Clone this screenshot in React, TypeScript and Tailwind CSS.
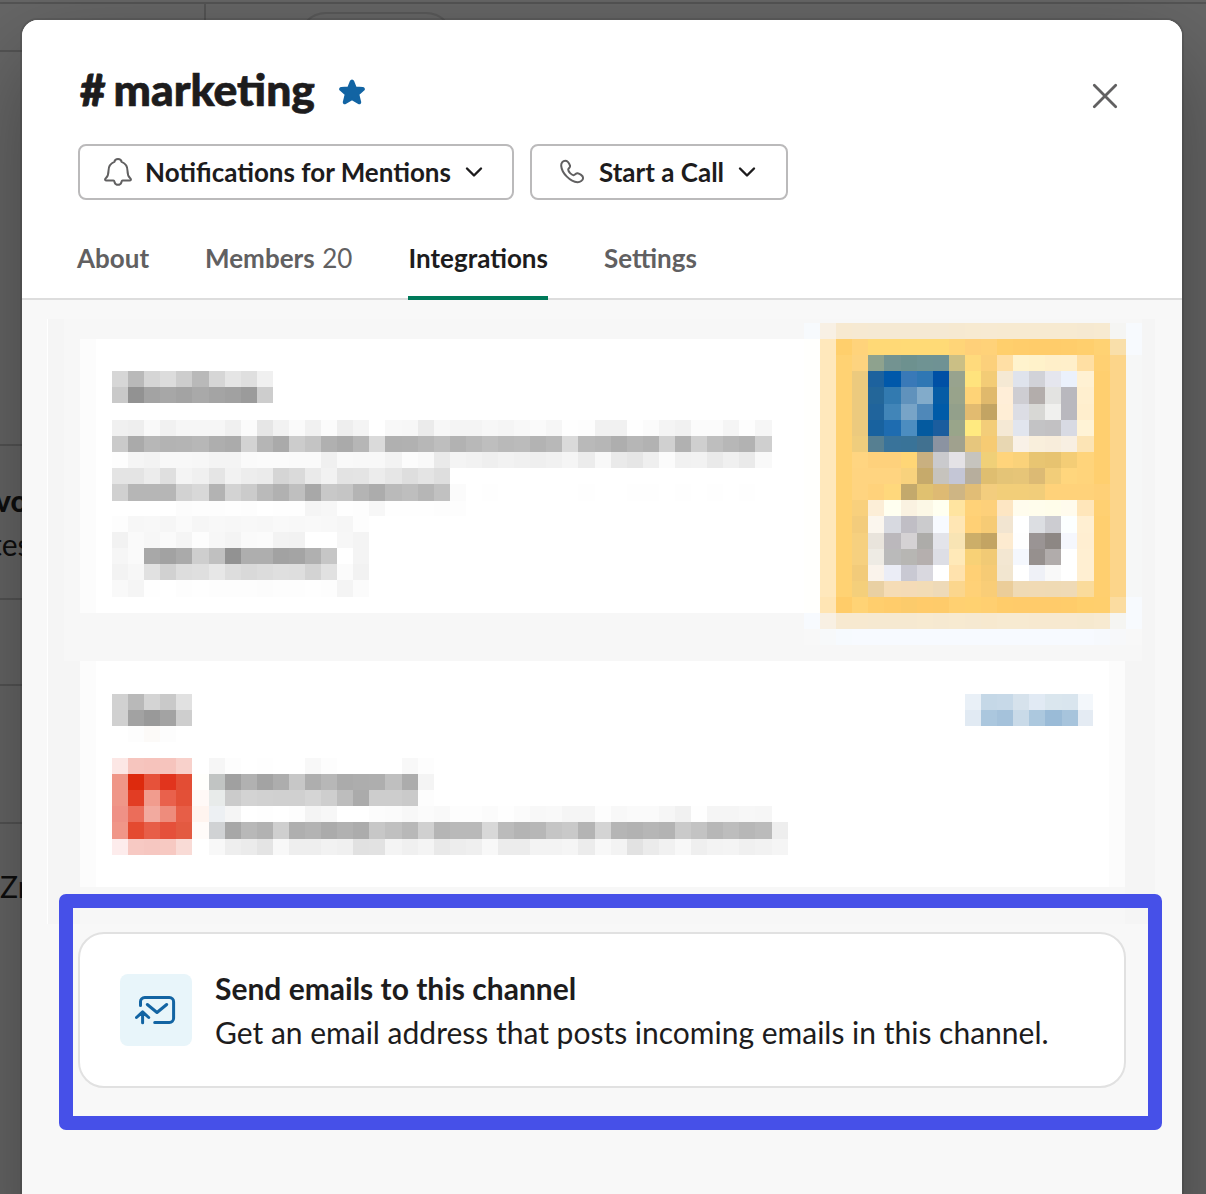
import React from "react";

const CELL_W = 16.086;
const CELL_H = 16.12;

/** Pixelated graphic: each row is a space separated list of cells, "xx" for a grey, "rrggbb" for a colour, "." for nothing. */
function Mosaic({ rows, className = "" }: { rows: string[]; className?: string }) {
  const grid = rows.map((r) => r.trim().split(/\s+/));
  const cols = Math.max(...grid.map((r) => r.length));
  return (
    <svg
      className={"block shrink-0 " + className}
      width={cols * CELL_W}
      height={grid.length * CELL_H}
      shapeRendering="crispEdges"
    >
      {grid.map((row, y) =>
        row.map((c, x) =>
          c === "." ? null : (
            <rect
              key={x + "-" + y}
              x={x * CELL_W}
              y={y * CELL_H}
              width={CELL_W}
              height={CELL_H}
              fill={"#" + (c.length === 2 ? c + c + c : c)}
            />
          )
        )
      )}
    </svg>
  );
}

const heading = [
  "d6 b9 d5 dc cd b9 d6 e5 df f0",
  "c9 92 a3 a7 a3 a9 a4 a1 9b cd",
];

const paragraph = [
  "f0 ee f9 f1 f6 f6 f6 f0 fb e6 f2 fa f1 fb ee f4 ff f8 f7 eb f7 f4 f4 f7 f5 f8 fa f6 fe fd f1 f1 fe fb f4 f1 fb fb f5 fd f6",
  "ca aa b7 b3 b4 b7 ae ab d3 b5 aa cc c4 b0 aa b6 da b0 b1 b7 be b2 b8 be b9 bb b3 b8 da b9 b6 ae b6 b2 d0 b1 cf be b7 b2 cf",
  "fd f5 f3 f8 f8 f7 f4 f4 fa fb fb fa fa f0 f9 f8 f8 f3 fc f9 ea f4 f2 ef f2 f0 ef f1 f5 ec f8 ea e6 ef fb f1 f2 ea f0 ea f9",
  "e4 e4 ec df f4 f0 e5 f2 ed eb d5 da ea f2 e3 e4 ec e6 de e4 de",
  "d0 b6 b6 b6 d2 d8 b3 d3 cb ba b1 bf a8 c8 c5 b4 ac ba be b6 c1 fb . fe . . . . . fe . . fe fe . fe . fe . fe",
  ". . . . fc fd fd fe fd . fe fe f5 f7 fe fd f7 fe fe fe fd fd",
];

const action = [
  "fd f7 f8 f6 fa f6 f8 f7 f8 f7 f9 f8 f9 f8 f6 fd",
  "f2 fa f7 fa f5 fd f7 f4 fa fb f3 f2 ff ff f7 f4",
  "f6 fa a8 a2 aa ce c0 92 ae ae a2 a4 b0 c6 ff f4",
  "f3 f7 e1 d1 dd df e7 dd d9 dc df de d3 e1 fb f2",
  "f9 f5 fe ff fd fe fd fd fd fc fd fd fe fd f4 fb",
];

const picture = [
  "f7fafd f8f0e4 f7e9d0 f6e9d2 f5e9d3 f5e9d3 f5e9d3 f5e9d3 f5e9d3 f6e9d1 f7ead1 f7ead2 f7ead1 f7ead1 f7ead1 f7ead1 f7ead1 f6e9d1 f7ead1 f5f5f3 f7fafe",
  "fffffd ffe8bc ffcf6c ffd37b ffd976 ffd976 ffda76 ffda76 ffda76 ffd578 ffd079 ffd279 ffcf6c ffcd6b ffcc6a ffcc6a ffcd6b ffcf6d ffd273 f9dfaa f7fafe",
  "fffffd ffe8bc ffd273 fdd37f 8ea28e 739391 6d918f 6f9393 6f9294 cbbf85 ffda7c fcd07b ffdfa5 fff3cd fff2ca ffefc9 ffefca ffdfa3 ffd072 fcd58a f6f7f7",
  "fffffd ffe8bc ffd273 ecca7e 1d629e 0058aa 3979b8 2f77b4 0050a5 98a38e ffe37d f3cc76 f5e9d4 dfe3ec d1d2d8 e5e6ee ebf1fc fff1d3 ffcf6f fcd58a f6f7f7",
  "fffffd ffe8bc ffd273 ecca7e 236699 327ab0 6092bc 82abca 065ca5 98a38b fed377 e0b96c ffeed8 cecdd2 b3adab e3e3e1 b9b8be ffefcf ffcf6f fcd58a f6f7f7",
  "fffffd ffe8bc ffd273 ecca7e 20649c 4185b8 78a4c7 4f88b9 005ba8 93a08b e2bb70 c3a463 ffeed6 dcdde4 d8d8d5 f0f0ee b9b8be ffeecd ffcf6f fcd58a f6f7f7",
  "fffffd ffe8bc ffd273 ecca7e 18629f 1e6cb0 4c8dc0 045a9f 1b5d9e 99a58a ffea80 f3cd79 f5e9d5 e1e5ee c3c3c5 c2c1c3 d8dae3 fff3d6 ffcf6f fcd58a f6f7f7",
  "fffffd ffe8bc ffd273 efcd7d 567f91 39739a 397398 417190 8b93a1 a0a18e e6c67d f6cb73 e8d7b2 f9f1e7 f9efdc f8eddb f8efe2 fce4b5 ffcf6f fcd58a f6f7f7",
  "fffffd ffe8bc ffd273 ffd581 fed17c fed17c ffd676 c9b080 cacacd e4e2e6 c6c4be f0d078 ffd47b fad27a e8c572 e7c370 f4cd76 ffd47b ffcf6f fcd58a f6f7f7",
  "fffffd ffe8bc ffd273 ffd480 ffd480 ffd480 f8d27d c6aa6b c6c3bd c4c6d6 b7ae9d dfbe70 e4c477 e6c578 dcba74 f2cd79 ffd67d ffd47b ffcf6f fcd58a f6f7f7",
  "fffffd ffe8bc ffd273 ffd480 ffd27b ffd87c c3a96c e0c170 deba73 ceb584 e1bd76 f3cd7e f2ce79 f2ce79 f1cd7a ffd27a ffd27a ffd27a ffd077 fcd58a f6f7f7",
  "fffffd ffe8bc ffd273 f8d07d fceed7 fffff0 faf2e1 fcf8e6 fffff0 ffe4a0 ffd278 fdd07a fde6c3 fffced fffdec fffdea fffbed ffe6ba ffd072 fcd58a f6f7f7",
  "fffffd ffe8bc ffd273 f3cc7c fbf6ee d7d9e0 c0bec5 cbcbcd f7faff ffe6b4 ffd075 f6cb75 f2e5d1 ffffff dcdee2 ccccd1 fcffff ffefd2 ffcf6f fcd58a f6f7f7",
  "fffffd ffe8bc ffd273 f6d07f e9e4dc bbb8bc d5d2d4 adaca9 e3e4ea f8e4b4 ccae69 c3a463 fdebd0 fefefe 9a9494 8d8784 f5f7fd ffeed1 ffcf6f fcd58a f6f7f7",
  "fffffd ffe8bc ffd273 f6d07f eeebe4 bababa b7b6b3 b5afae dddee5 ffe9b8 f8d176 f1ca75 f3e7d2 f4f7fd 96908e b1acab ffffff ffefd2 ffcf6f fcd58a f6f7f7",
  "fffffd ffe8bc ffd273 f2cb7a faf3eb ebedf6 c9c9d3 d9d8df ffffff ffe2ad ffd075 f6cb75 f2e6d0 ffffff eff1f7 f9f9f9 ffffff ffefd2 ffcf6f fcd58a f6f7f7",
  "fffffd ffe8bc ffd273 f4cf7b e9d0a3 f5dcb6 f4dbb7 f2dcb6 eedab8 fbd68d ffd177 f9cd77 ebcd99 efdab5 f0dab4 efdab4 efdab6 fadb9b ffcf6f fcd58a f6f7f7",
  "fffffd ffe5b4 ffcc69 ffd375 ffce6d ffcc6b fccb6b ffcb6a fecb6a ffd071 ffd170 ffcf70 ffcc6a ffcb6a ffcb6a ffcb6a ffcc6a ffcf6c ffcf6d fbdca0 f7fafe",
  "f7fafe f8f0e3 f7e9d0 f7e9d0 f6e9d1 f6e9d1 f6e9d1 f7ead1 f6e9d1 f7ead1 f6e9d1 f7e9cf f7ead1 f7ead1 f7e9d0 f7e9d0 f7e9d0 f6e9cf f7ead1 f5f5f2 f7fafe",
  "f8f8f8 f7f9fa f6fafe f7faff f7faff f7faff f7faff f7faff f7faff f7faff f7faff f7faff f7faff f7faff f7faff f7faff f7faff f7faff f6f9fd f7f8fa f8f8f8",
];

const listTitle = [
  "d1 b9 d4 c9 e1",
  "d0 a2 99 a3 ce",
  ". fd fcfaf8 fd .",
];

const link = [
  "e9f0f7 c5d8e7 c7d9e8 d6e2ec e1eaf4 dae6ee d9e5ee f3f7fb",
  "e1eaf3 abc7de a5c2db c9dae8 acc8de 9abbd7 a7c4dc e4ebf3",
];

const listItem = [
  "fce7e5 f6c5be f6c3bc f6c4bd f8d1cb . f6 fd ff fe ff ff f8 fd ff ff ff ff f8 fd",
  "ef9687 dd2a0d e6523a e1341d e34d34 fffffc c1c4c3 a0 b1 a3 ad c7 ae b7 ab ad ae bf ac f4",
  "ef9688 e23d24 f19c8e e9614c e35037 fff9f7 e8ebea cb d3 d1 d0 d0 d5 ce bd ab cd cd ca fd",
  "ef9186 eb6d5a f2aa9f ee8c7c e75e47 fff4ef edf0f3 f5 ff fe ff fd f4 f7 ff ff fc fb f8 fb f9 fd fd fb fe fb f8 f9 f5 f5 fd f8 fa fa f6 f1 fe f5 f5 f7 f6",
  "f09688 e44a30 e75e48 e5503a e35a41 fffbf9 d0d2d4 a7 b8 b2 cf af b3 ab b1 ac c7 c0 b8 d0 b5 b9 b9 d8 bb b4 b7 c5 c9 b4 d4 b5 b2 b6 b3 ca c3 b7 bd b7 bb ee",
  "fdecec f7c9c3 f6c7c1 f7c9c2 f9dbd6 . f8 ee eb e4 f8 ee ee f2 f0 e1 e2 f4 f0 f4 e9 ed ef f8 ec ec f3 f3 f5 ec f8 f3 e2 eb f1 f8 ef f3 f4 f0 f2 f5",
];

function BellIcon() {
  return (
    <svg width="28" height="30" viewBox="0 0 28 30" fill="none" stroke="#616061" strokeWidth="2" strokeLinejoin="round">
      <path d="M14 2c1.900 0 3.300 1.200 3.700 2.900 4 1.700 5.800 4.900 5.800 8.800 0 3.700.7 5.700 2.700 7.500 1.300 1.300.7 2.400-.7 2.400H18.600c-1.200 0-.8.800-1.200 1.700-.6 1.600-1.800 2.500-3.400 2.500s-2.800-.9-3.400-2.500c-.4-.9 0-1.700-1.200-1.700H2.500c-1.400 0-2-1.100-.7-2.400 2-1.800 2.700-3.800 2.700-7.500 0-3.900 1.800-7.100 5.800-8.800C10.700 3.200 12.100 2 14 2z" />
    </svg>
  );
}

function PhoneIcon() {
  return (
    <svg width="25" height="26" viewBox="0 0 25 26" fill="none" stroke="#616061" strokeWidth="2" strokeLinejoin="round">
      <path d="M1.200 6.800C1 3.700 3 1.700 5.200 1.700c2.400 0 4.200 3.100 4.900 5.100.5 1.700-2 2.400-1.900 3.900.2 2.200 3.100 5.200 5.300 5.500 1.500.2 2.200-2.200 4.100-1.900 2 .4 5.500 2.200 5.500 4.700 0 2.400-3 4.300-5.600 4.200C10.300 22.700 1.800 14.200 1.200 6.800z" />
    </svg>
  );
}

function Chevron() {
  return (
    <svg width="18" height="12" viewBox="0 0 18 12" fill="none" stroke="#1d1c1d" strokeWidth="2.400" strokeLinecap="round" strokeLinejoin="round">
      <path d="M2 2.500l7 7 7-7" />
    </svg>
  );
}

function StarIcon() {
  return (
    <svg width="26" height="26" viewBox="0 0 26 26" fill="#1264a3" stroke="#1264a3" strokeWidth="2.400" strokeLinejoin="round">
      <path d="M13 1.700c.5 0 .8.300 1 .8l2.500 6.300 7.400.5c.8.100 1 .9.500 1.400l-5.300 4.600 1.900 7.700c.2.900-.5 1.400-1.200 1L13 20l-6.800 4c-.7.400-1.400-.1-1.200-1l1.900-7.700-5.300-4.600c-.5-.5-.3-1.300.5-1.400l7.400-.5L12 2.500c.2-.5.500-.8 1-.8z" />
    </svg>
  );
}

function CloseIcon() {
  return (
    <svg width="26" height="26" viewBox="0 0 26 26" fill="none" stroke="#616061" strokeWidth="2.800" strokeLinecap="round">
      <path d="M2.300 2.300l21.400 21.400M23.700 2.300L2.300 23.700" />
    </svg>
  );
}

function MailIcon() {
  return (
    <svg width="42" height="31" viewBox="0 0 42 31" fill="none" stroke="#1264a3" strokeWidth="3" strokeLinecap="round" strokeLinejoin="round">
      <path d="M5.500 10.500V6.700a4.200 4.200 0 0 1 4.200-4.200h24.700a4.200 4.200 0 0 1 4.200 4.200v16.600a4.200 4.200 0 0 1-4.200 4.200H19.700" />
      <path d="M12.300 9.500l9.700 8 9.700-8" />
      <path d="M7.600 27.700V16.900M1.500 22.500l6.100-5.700 6.100 5.700" />
    </svg>
  );
}

function Backdrop() {
  return (
    <div className="h-full pt-[2px]">
      <div className="flex h-[48px] border-t-2 border-[#545454]">
        <div className="w-[206px] border-r-2 border-[#545454]" />
        <div className="ml-[92px] mt-[8px] h-[56px] w-[156px] rounded-[28px] border-2 border-[#595959]" />
      </div>
      <div className="h-[2px] w-[22px] bg-[#545454]" />
      <div className="h-[394px] w-[22px] border-b-2 border-[#545454]" />
      <div className="flex h-[154px] w-[22px] flex-col items-start whitespace-nowrap border-b-2 border-[#545454] pt-[32px] text-[30px] leading-[44px] text-[#0e0e0e]">
        <div className="-ml-[5px] font-black">vo</div>
        <div className="-ml-[9px]">tes</div>
      </div>
      <div className="h-[86px] w-[22px] border-b-2 border-[#545454]" />
      <div className="h-[138px] w-[22px] border-b-2 border-[#545454]" />
      <div className="w-[22px] pt-[40px] text-[30px] leading-[44px] text-[#0e0e0e]">Zr</div>
    </div>
  );
}

function Tab({ label, count, active }: { label: string; count?: string; active?: boolean }) {
  return (
    <div
      className={
        "flex h-full items-start whitespace-pre border-b-4 pt-[5px] leading-[40px] " +
        (active ? "border-[#007a5a] text-[#1d1c1d]" : "border-transparent text-[#616061]")
      }
    >
      <span className="font-bold">{label}</span>
      {count && <span className="ml-px"> {count}</span>}
    </div>
  );
}

export default function App() {
  return (
    <div className="relative h-[1194px] w-[1206px] overflow-hidden bg-[#666] font-['Lato',sans-serif] text-[#1d1c1d]">
      <Backdrop />
      <div className="absolute left-[22px] top-[20px] flex h-[1240px] w-[1160px] flex-col overflow-hidden rounded-[16px] bg-[#f8f8f8] shadow-[0_0_0_2px_rgba(29,28,29,0.13),0_36px_96px_0_rgba(0,0,0,0.35)]">
        <header className="flex h-[280px] shrink-0 flex-col border-b-2 border-[#dddddd] bg-white">
          <div className="flex h-[124px] items-start pl-[58px] pr-[64px] pt-[41px]">
            <h1 className="flex w-[237px] items-baseline text-[44.400px] font-black leading-[56px] [-webkit-text-stroke:0.7px_#1d1c1d]">
              <span className="w-[33.500px] text-[44px] [-webkit-text-stroke:1px_#1d1c1d]">#</span>
              <span>marketing</span>
            </h1>
            <div className="ml-[22px] mt-[18px] flex w-[26px]">
              <StarIcon />
            </div>
            <button className="ml-auto mt-[22px]">
              <CloseIcon />
            </button>
          </div>
          <div className="flex gap-4 pl-[56px] text-[26px] font-bold">
            <button className="flex h-[56px] w-[436px] items-center rounded-lg border-2 border-[#bbbabb] pl-[24px]">
              <BellIcon />
              <span className="ml-[13px] mr-[14px] whitespace-nowrap">Notifications for Mentions</span>
              <Chevron />
            </button>
            <button className="flex h-[56px] w-[258px] items-center rounded-lg border-2 border-[#bbbabb] pl-[28px]">
              <PhoneIcon />
              <span className="ml-[14px] mr-[14px] whitespace-nowrap">Start a Call</span>
              <Chevron />
            </button>
          </div>
          <nav className="-mb-[2px] mt-[33px] flex flex-1 gap-[56px] pl-[55px] text-[26px]">
            <Tab label="About" />
            <Tab label="Members" count="20" />
            <Tab label="Integrations" active />
            <Tab label="Settings" />
          </nav>
        </header>

        <main className="flex flex-col">
          <div className="ml-[25px] mt-[19px] flex h-[605px] w-[1108px] flex-col border-l border-white bg-[#f7f7f7]">
            <div className="flex h-[342px] border-l-[16px] border-r-[13px] border-[#f5f5f5]">
              <div className="ml-[16px] mt-[20px] flex h-[274px] w-[724px] shrink-0 flex-col border-l-[16px] border-[#fcfcfc] bg-white pl-[16.300px] pt-[32.200px]">
                <Mosaic rows={heading} />
                <Mosaic rows={paragraph} className="mt-[16.200px]" />
                <Mosaic rows={action} />
              </div>
              <Mosaic rows={picture} className="mt-[3.500px]" />
            </div>
            <div className="flex flex-1 flex-col border-l-[32px] border-r-[30px] border-[#f5f5f5]">
              <div className="flex h-[226px] flex-col border-x-[16px] border-[#fcfcfc] bg-white pl-[16.300px] pt-[33px]">
                <div className="flex justify-between pr-[15.700px]">
                  <Mosaic rows={listTitle} />
                  <Mosaic rows={link} />
                </div>
                <Mosaic rows={listItem} className="mt-[16.100px]" />
              </div>
            </div>
          </div>

          <section className="ml-[56px] mt-[8px] flex h-[156px] w-[1048px] items-center rounded-[26px] border-2 border-[#e1e1e1] bg-white pl-[40px]">
            <div className="flex h-[72px] w-[72px] items-center justify-center rounded-lg bg-[#e8f5fa]">
              <MailIcon />
            </div>
            <div className="ml-[23px] whitespace-nowrap text-[30px] leading-[44px]">
              <div className="font-bold">Send emails to this channel</div>
              <div>Get an email address that posts incoming emails in this channel.</div>
            </div>
          </section>
        </main>
      </div>
      <div className="absolute left-[59px] top-[894px] h-[236px] w-[1103px] rounded-[7px] border-[14px] border-[#4650e8]" />
    </div>
  );
}
